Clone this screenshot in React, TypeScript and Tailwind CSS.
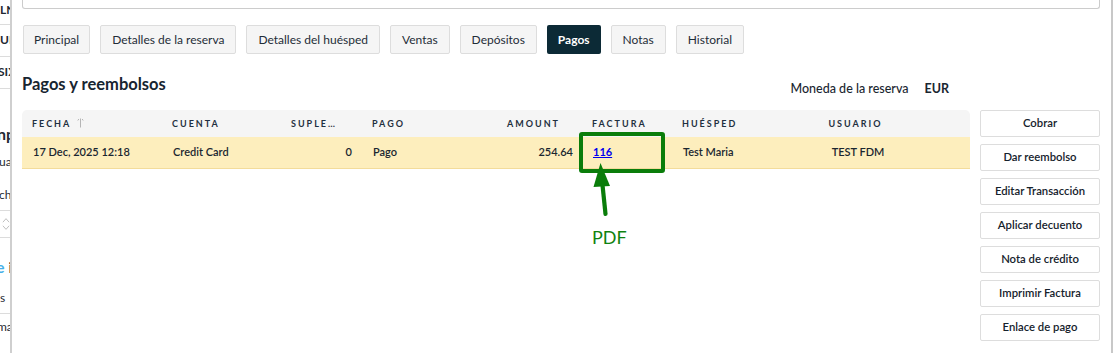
import React from "react";

const tabs = [
  "Principal",
  "Detalles de la reserva",
  "Detalles del huésped",
  "Ventas",
  "Depósitos",
  "Pagos",
  "Notas",
  "Historial",
];

const buttons = [
  "Cobrar",
  "Dar reembolso",
  "Editar Transacción",
  "Aplicar decuento",
  "Nota de crédito",
  "Imprimir Factura",
  "Enlace de pago",
];

function LeftStrip() {
  return (
    <div className="w-[10px] shrink-0 overflow-hidden bg-white text-[#1f2a33] whitespace-nowrap">
      <div className="h-[25px] border-b border-[#dcdcdc] text-[12px] leading-[20px] font-bold">LNG</div>
      <div className="h-[32px] border-b border-[#dcdcdc] text-[12px] leading-[30px] font-bold">UIX</div>
      <div className="h-[32px] border-b border-[#dcdcdc] text-[12px] leading-[30px] font-bold ml-[-2px]">SIX</div>
      <div className="h-[32px]" />
      <div className="h-[26px] text-[16px] leading-[26px] font-bold ml-[-3px]">np</div>
      <div className="h-[33px] text-[12px] leading-[30px] ml-[-1px]">ua</div>
      <div className="h-[30px] text-[12px] leading-[30px] ml-[-1px]">che</div>
      <div className="h-[28px] border-y border-[#dcdcdc] flex items-center pl-[2px]">
        <svg width="9" height="16" viewBox="0 0 9 16" fill="none" stroke="#b8b8b8" strokeWidth="1">
          <path d="M1 6 L4.5 2 L8 6" />
          <path d="M1 10 L4.5 14 L8 10" />
        </svg>
      </div>
      <div className="h-[30px] mt-[14px] text-[16px] leading-[30px] font-bold ml-[-4px]">
        <span className="text-[#47b0e8]">e</span> ii
      </div>
      <div className="h-[31px] text-[12px] leading-[31px]">s</div>
      <div className="h-[28px] border-t border-[#dcdcdc] text-[12px] leading-[26px] ml-[-3px]">ma</div>
    </div>
  );
}

function SortIcon() {
  return (
    <svg width="7" height="10" viewBox="0 0 7 10" fill="none" stroke="#b5b5b5" strokeWidth="1" className="inline-block ml-[6px] mb-[1px]">
      <path d="M3.5 0.5 V9.5" />
      <path d="M0.8 2.5 L1.8 1" />
      <path d="M6.2 2.5 L5.2 1" />
    </svg>
  );
}

function Table() {
  const head = "text-[9px] font-bold tracking-[2px] text-[#1f3040] flex items-center";
  const cell = "text-[11px] font-semibold text-[#1a2630] flex items-center";
  return (
    <div className="relative w-[948px]">
      <div className="grid grid-cols-[140px_119px_81px_100px_120px_90px_69px_229px] h-[27px] bg-[#f5f5f5] rounded-t-[5px]">
        <div className={`${head} pl-[10px]`}>
          FECHA
          <SortIcon />
        </div>
        <div className={`${head} pl-[10px]`}>CUENTA</div>
        <div className={`${head} pl-[10px]`}>SUPLE…</div>
        <div className={`${head} pl-[10px]`}>PAGO</div>
        <div className={`${head} justify-end pr-[22px]`}>AMOUNT</div>
        <div className={`${head} pl-[10px]`}>FACTURA</div>
        <div className={`${head} pl-[10px]`}>HUÉSPED</div>
        <div className={`${head} justify-center`}>USUARIO</div>
      </div>
      <div className="grid grid-cols-[140px_119px_81px_100px_120px_90px_69px_229px] h-[32px] bg-[#fdeebd] border-b border-[#f3dc9b]">
        <div className={`${cell} pl-[11px]`}>17 Dec, 2025 12:18</div>
        <div className={`${cell} pl-[11px]`}>Credit Card</div>
        <div className={`${cell} justify-end pr-[10px]`}>0</div>
        <div className={`${cell} pl-[11px]`}>Pago</div>
        <div className={`${cell} justify-end pr-[9px]`}>254.64</div>
        <div className={`${cell} pl-[11px]`}>
          <span className="text-[#0000ee] font-bold underline">116</span>
        </div>
        <div className={`${cell} pl-[11px]`}>Test Maria</div>
        <div className={`${cell} justify-center pl-[5px]`}>TEST FDM</div>
      </div>

      {/* annotation */}
      <div className="absolute left-[557px] top-[22px] w-[86px] h-[41px] border-[4px] border-[#0a7d0a] rounded-[3px]" />
      <svg className="absolute left-[568px] top-[50px]" width="60" height="60" viewBox="0 0 60 60">
        <path d="M10.5 3 L3.5 27 L20 26 Z" fill="#0a7d0a" />
        <path d="M12.5 25 L15.5 54" stroke="#0a7d0a" strokeWidth="4.2" strokeLinecap="round" fill="none" />
      </svg>
      <div className="absolute left-[570px] top-[116px] text-[18px] leading-[22px] text-[#0f820f] font-['Lato',sans-serif]">
        PDF
      </div>
    </div>
  );
}

export default function App() {
  return (
    <div className="w-[1116px] h-[353px] overflow-hidden bg-white flex font-['Lato',sans-serif] text-[#1a2630]">
      <LeftStrip />
      <div className="w-[2px] shrink-0 bg-[#cfcfcf]" />
      <div className="w-[1099px] shrink-0 pl-[10px] pr-[11px] flex flex-col">
        <div className="h-[9px] border border-t-0 border-[#cccccc] rounded-b-[3px]" />
        <div className="flex gap-[10px] mt-[16px] ml-[1px] h-[29px]">
          {tabs.map((t) =>
            t === "Pagos" ? (
              <div key={t} className="px-[11px] flex items-center rounded-[2px] bg-[#0c2a36] text-white text-[12px] font-bold">
                {t}
              </div>
            ) : (
              <div
                key={t}
                className={`${t === "Principal" ? "px-[10px]" : "px-[11px]"} flex items-center rounded-[2px] bg-[#f5f5f5] border border-[#dddddd] text-[12px] text-[#1f2d38]`}
              >
                {t}
              </div>
            )
          )}
        </div>
        <div className="w-[948px] h-[36px] mt-[20px] flex justify-between items-start">
          <div className="text-[16.5px] leading-[21px] font-bold text-[#172530]">Pagos y reembolsos</div>
          <div className="flex mt-[7px] pr-[21px] text-[12.5px] leading-[16px]">
            <span className="font-medium text-[#1a2630]">Moneda de la reserva</span>
            <span className="ml-[16px] font-bold">EUR</span>
          </div>
        </div>
        <div className="flex gap-[10px]">
          <Table />
          <div className="w-[120px] flex flex-col gap-[7px]">
            {buttons.map((b) => (
              <div key={b} className="h-[27px] flex items-center justify-center border border-[#dddddd] rounded-[2px] bg-white text-[11.3px] font-semibold text-[#15222c]">
                {b}
              </div>
            ))}
          </div>
        </div>
      </div>
      <div className="w-[2px] shrink-0 bg-[#c8c8c8]" />
      <div className="flex-1 bg-white" />
    </div>
  );
}
